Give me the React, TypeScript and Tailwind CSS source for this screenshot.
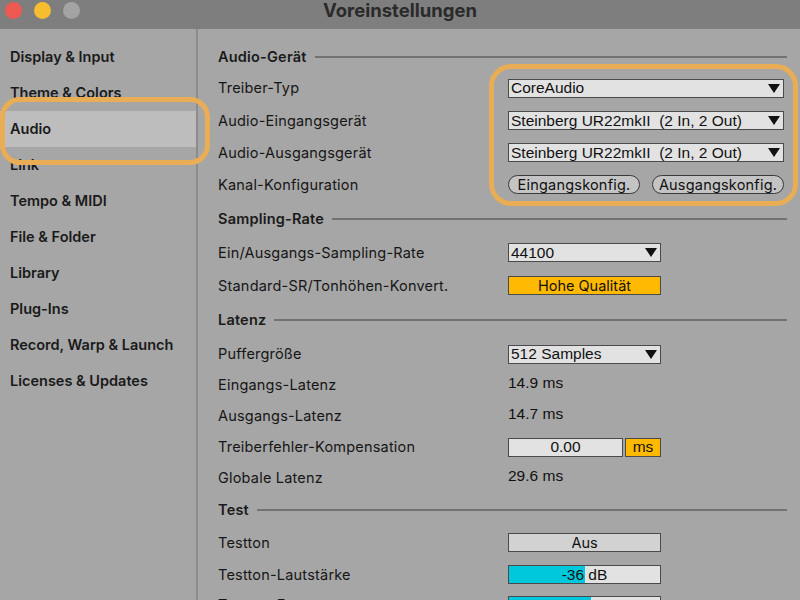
import React from 'react';

const ui = "font-['Inter','Noto_Sans',sans-serif]";
const val = "font-['Liberation_Sans',Arial,sans-serif]";

const navItems = [
  'Display & Input',
  'Theme & Colors',
  'Audio',
  'Link',
  'Tempo & MIDI',
  'File & Folder',
  'Library',
  'Plug-Ins',
  'Record, Warp & Launch',
  'Licenses & Updates',
];

const Arrow = () => (
  <svg width="12" height="9" viewBox="0 0 12 9" className="shrink-0">
    <polygon points="0,0 12,0 6,9" fill="#111" />
  </svg>
);

const Dropdown = ({ text, wide = false }: { text: string; wide?: boolean }) => (
  <div
    className={`flex h-[19px] items-center justify-between border-[1.5px] border-[#4a4a4a] bg-[#e2e2e2] pl-[2px] pr-[3px] ${
      wide ? 'w-[276px]' : 'w-[153px]'
    }`}
  >
    <span className={`${val} whitespace-pre text-[15.5px] leading-none text-[#111]`}>{text}</span>
    <Arrow />
  </div>
);

const Heading = ({ title, h }: { title: string; h: string }) => (
  <div className={`flex items-center ${h}`}>
    <span className={`${ui} text-[14.5px] font-semibold tracking-[0.2px] text-[#1a1a1a]`}>{title}</span>
    <div className="ml-2 h-[2px] flex-1 bg-[#727272]" />
  </div>
);

const Row = ({ label, h, children }: { label: string; h: string; children?: React.ReactNode }) => (
  <div className={`flex items-center ${h}`}>
    <span className={`${ui} w-[290px] shrink-0 text-[14.5px] tracking-[0.2px] text-[#161616]`}>{label}</span>
    {children}
  </div>
);

const Value = ({ text }: { text: string }) => (
  <span className={`${val} -mt-[4px] text-[15.5px] text-[#111]`}>{text}</span>
);

const Slider = ({ text, pct }: { text: string; pct: number }) => (
  <div className="relative flex h-[19px] w-[153px] items-center justify-center overflow-hidden border-[1.5px] border-[#4a4a4a] bg-[#e2e2e2]">
    <div className="absolute inset-y-0 left-0 bg-[#00c8dc]" style={{ width: `${pct}%` }} />
    <span className={`${val} relative text-[15.5px] leading-none text-[#111]`}>{text}</span>
  </div>
);

export default function App() {
  return (
    <div className="relative h-[600px] w-[800px] overflow-hidden bg-[#a6a6a6]">
      {/* Title bar */}
      <div className="relative flex h-[29px] items-center justify-center bg-[#7e7e7e]">
        <div className="absolute left-[5px] top-[2px] flex gap-[12px]">
          <div className="h-[17px] w-[17px] rounded-full bg-[#ee5a52]" />
          <div className="h-[17px] w-[17px] rounded-full bg-[#f6bd30]" />
          <div className="h-[17px] w-[17px] rounded-full bg-[#a3a3a3]" />
        </div>
        <span className={`${ui} -mt-[8px] text-[18.5px] font-bold text-[#2a2a2a]`}>Voreinstellungen</span>
      </div>

      <div className="flex h-[571px]">
        {/* Sidebar */}
        <div className="w-[196px] shrink-0 pt-[10px]">
          {navItems.map((item) => (
            <div
              key={item}
              className={`flex h-[36px] items-center pl-[10px] ${item === 'Audio' ? 'bg-[#bdbdbd]' : ''}`}
            >
              <span className={`${ui} text-[14.5px] font-semibold text-[#1a1a1a]`}>{item}</span>
            </div>
          ))}
        </div>
        <div className="w-[2px] shrink-0 bg-[#8c8c8c]" />

        {/* Main */}
        <div className="flex-1 pl-[20px] pr-[13px] pt-[13px]">
          <Heading title="Audio-Gerät" h="h-[30px]" />
          <Row label="Treiber-Typ" h="h-[32px]">
            <Dropdown text="CoreAudio" wide />
          </Row>
          <Row label="Audio-Eingangsgerät" h="h-[33px]">
            <Dropdown text="Steinberg UR22mkII  (2 In, 2 Out)" wide />
          </Row>
          <Row label="Audio-Ausgangsgerät" h="h-[31px]">
            <Dropdown text="Steinberg UR22mkII  (2 In, 2 Out)" wide />
          </Row>
          <Row label="Kanal-Konfiguration" h="h-[33px]">
            <div className="flex w-[276px] justify-between">
              <div className={`${ui} flex h-[19px] w-[132px] items-center justify-center rounded-full border border-[#3a3a3a] bg-[#c4c4c4] text-[14.5px] tracking-[0.2px] text-[#111]`}>
                Eingangskonfig.
              </div>
              <div className={`${ui} flex h-[19px] w-[132px] items-center justify-center rounded-full border border-[#3a3a3a] bg-[#c4c4c4] text-[14.5px] tracking-[0.2px] text-[#111]`}>
                Ausgangskonfig.
              </div>
            </div>
          </Row>

          <Heading title="Sampling-Rate" h="h-[35px]" />
          <Row label="Ein/Ausgangs-Sampling-Rate" h="h-[33px]">
            <Dropdown text="44100" />
          </Row>
          <Row label="Standard-SR/Tonhöhen-Konvert." h="h-[33px]">
            <div className={`${ui} flex h-[19px] w-[153px] items-center justify-center border-[1.5px] border-[#4a4a4a] bg-[#ffb900] text-[14.5px] text-[#111]`}>
              Hohe Qualität
            </div>
          </Row>

          <Heading title="Latenz" h="h-[36px]" />
          <Row label="Puffergröße" h="h-[32px]">
            <Dropdown text="512 Samples" />
          </Row>
          <Row label="Eingangs-Latenz" h="h-[30px]">
            <Value text="14.9 ms" />
          </Row>
          <Row label="Ausgangs-Latenz" h="h-[32px]">
            <Value text="14.7 ms" />
          </Row>
          <Row label="Treiberfehler-Kompensation" h="h-[30px]">
            <div className="flex w-[153px] justify-between">
              <div className={`${val} flex h-[19px] w-[115px] items-center justify-center border-[1.5px] border-[#4a4a4a] bg-[#e2e2e2] text-[15.5px] text-[#111]`}>
                0.00
              </div>
              <div className={`${val} flex h-[19px] w-[36px] items-center justify-center border-[1.5px] border-[#4a4a4a] bg-[#ffb900] text-[15.5px] text-[#111]`}>
                ms
              </div>
            </div>
          </Row>
          <Row label="Globale Latenz" h="h-[31px]">
            <Value text="29.6 ms" />
          </Row>

          <Heading title="Test" h="h-[33px]" />
          <Row label="Testton" h="h-[33px]">
            <div className={`${ui} flex h-[19px] w-[153px] items-center justify-center border-[1.5px] border-[#4a4a4a] bg-[#d2d2d2] text-[14.5px] text-[#111]`}>
              Aus
            </div>
          </Row>
          <Row label="Testton-Lautstärke" h="h-[31px]">
            <Slider text="-36 dB" pct={50} />
          </Row>
          <Row label="Testton-Frequenz" h="h-[30px]">
            <Slider text="440 Hz" pct={54} />
          </Row>
        </div>
      </div>

      {/* Orange highlight marks */}
      <div className="pointer-events-none absolute left-0 top-[97px] h-[68px] w-[210px] rounded-[20px] border-[5px] border-[#e9ad55]" />
      <div className="pointer-events-none absolute left-[489px] top-[64px] h-[142px] w-[309px] rounded-[22px] border-[5px] border-[#e9ad55]" />
    </div>
  );
}
